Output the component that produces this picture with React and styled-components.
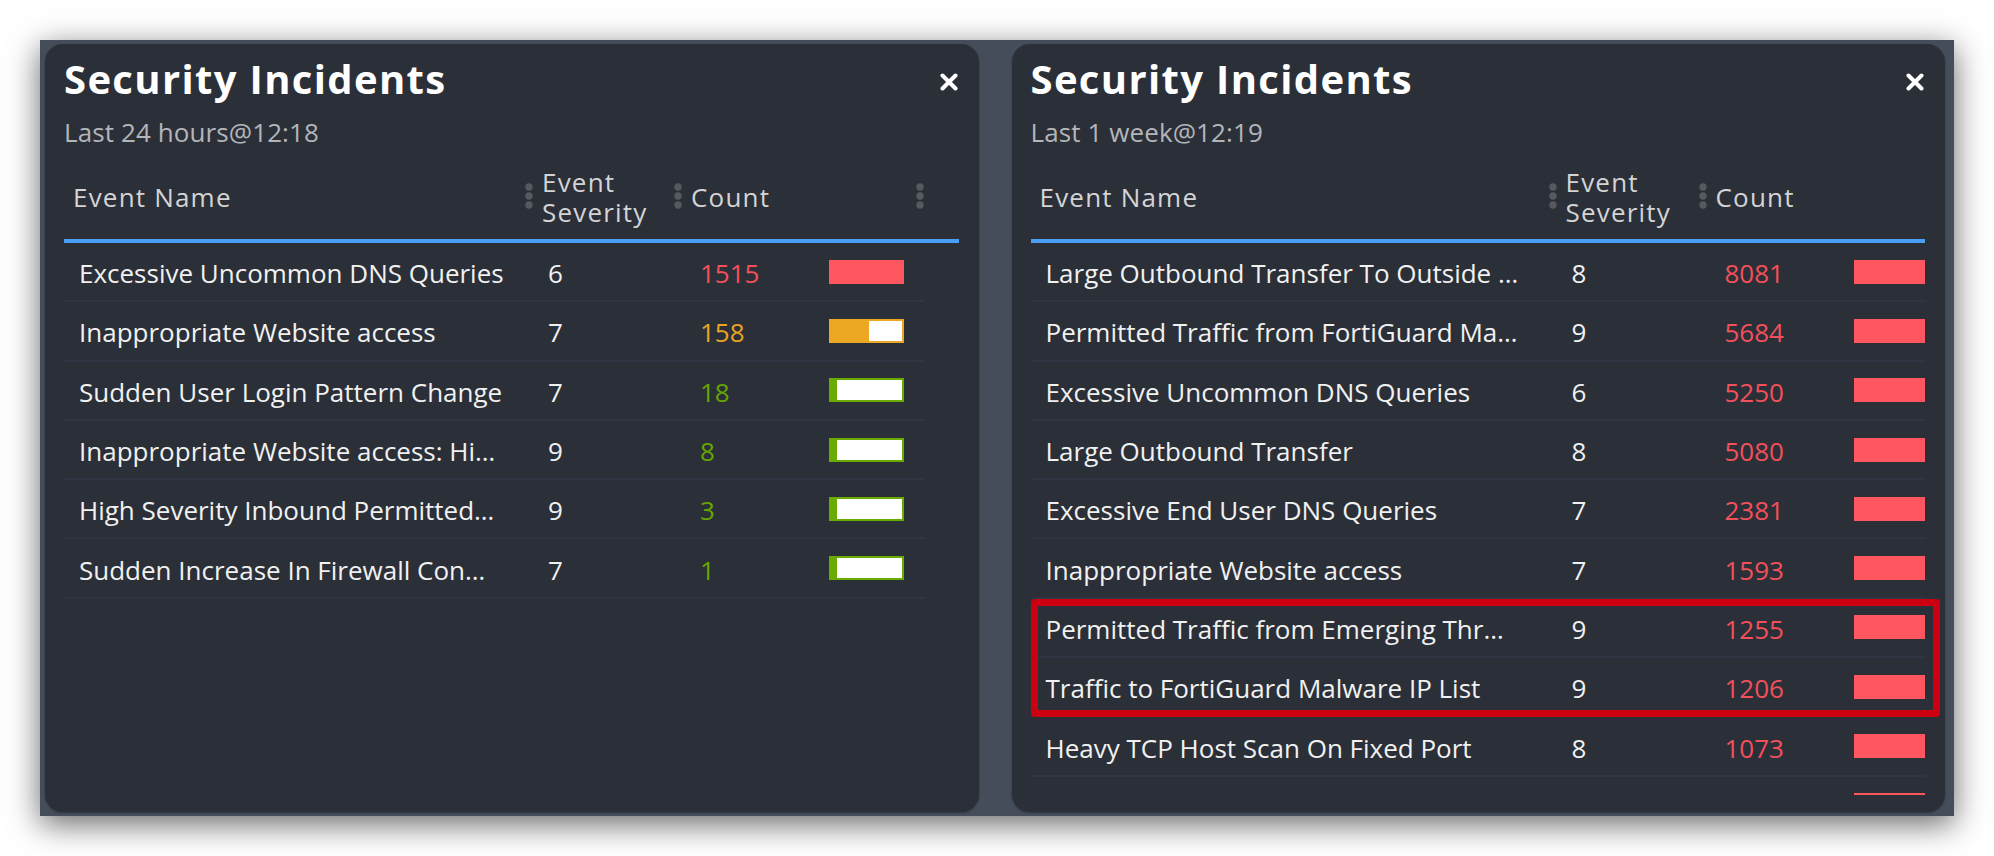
import React from "react";
import styled, { createGlobalStyle } from "styled-components";

const GlobalStyle = createGlobalStyle`
  html, body {
    margin: 0;
    padding: 0;
    background: #ffffff;
  }
  body {
    font-family: "Open Sans", "Noto Sans", sans-serif;
  }
`;

const LEVELS = {
  high: { text: "#f2505b", bar: "#ff5660" },
  medium: { text: "#e9a424", bar: "#eca822" },
  low: { text: "#66a600", bar: "#6aab00" },
};

const Page = styled.div`
  padding: 40px;
  width: 1994px;
  box-sizing: border-box;
`;

const Frame = styled.div`
  width: 1914px;
  height: 776px;
  box-sizing: border-box;
  padding: 4px 9px 4px 5px;
  display: flex;
  gap: 33px;
  background: #454c5a;
  box-shadow: 0 8px 30px rgba(0, 0, 0, 0.6);
`;

const Panel = styled.section`
  flex: 1;
  min-width: 0;
  display: flex;
  flex-direction: column;
  padding: 11px 20px 17px 19px;
  background: #2b2f38;
  border-radius: 18px;
  box-shadow: 0 1px 2px rgba(0, 0, 0, 0.3);
`;

const TitleBar = styled.div`
  display: flex;
  justify-content: space-between;
  align-items: flex-start;
`;

const Title = styled.h2`
  margin: 0;
  font-size: 40px;
  line-height: 48px;
  font-weight: 700;
  letter-spacing: 1.35px;
  color: #ffffff;
`;

const CloseButton = styled.button`
  margin: 18px 1px 0 0;
  padding: 0;
  border: 0;
  background: none;
  width: 18px;
  height: 18px;
  display: flex;
  cursor: pointer;
`;

const Subtitle = styled.div`
  margin-top: 13px;
  font-size: 26px;
  line-height: 32px;
  letter-spacing: 0.1px;
  color: #b3b5b9;
`;

const HeaderRow = styled.div`
  display: grid;
  grid-template-columns: ${(props) => props.cols};
  height: 85px;
  margin-top: 6px;
  border-bottom: 4px solid #4a9ff5;
`;

const HeaderCell = styled.div`
  display: flex;
  align-items: center;
  padding-left: 9px;
  font-size: 26px;
  line-height: 30px;
  letter-spacing: 1.2px;
  color: #d4d4d6;
`;

const HeaderLabel = styled.span`
  flex: 1;
`;

const Body = styled.div`
  flex: 1;
  min-height: 0;
  overflow-x: visible;
  overflow-y: clip;
`;

const Row = styled.div`
  display: grid;
  grid-template-columns: ${(props) => props.cols};
  width: max-content;
  height: 59.3px;
  box-sizing: border-box;
  align-items: center;
  border-bottom: 2px solid #2f3543;
  font-size: 26px;
  color: #f1f1f1;
`;

const Cell = styled.div`
  padding: 3px 0 0 15px;
  white-space: nowrap;
  overflow: hidden;
`;

const CountCell = styled(Cell)`
  display: flex;
  align-items: center;
  padding: 0 0 0 18px;
`;

const CountValue = styled.span`
  width: 129px;
  flex: none;
  padding-top: 3px;
  color: ${(props) => LEVELS[props.level].text};
`;

const Bar = styled.div`
  width: ${(props) => props.width}px;
  height: 24px;
  box-sizing: border-box;
  padding: 2px;
  display: flex;
  justify-content: flex-end;
  background: ${(props) => LEVELS[props.level].bar};
`;

const BarRest = styled.div`
  height: 100%;
  background: #ffffff;
`;

const Highlight = styled.div`
  position: relative;

  &::after {
    content: "";
    position: absolute;
    top: 0;
    left: 0;
    right: -15px;
    bottom: 0;
    border: 7px solid #cc0010;
    border-radius: 4px;
    pointer-events: none;
  }
`;

function Grip() {
  return (
    <svg width="8" height="27" viewBox="0 0 8 27">
      <circle cx="4" cy="4" r="3.7" fill="#57595e" />
      <circle cx="4" cy="13" r="3.7" fill="#57595e" />
      <circle cx="4" cy="22" r="3.7" fill="#57595e" />
    </svg>
  );
}

function CloseIcon() {
  return (
    <svg width="18" height="18" viewBox="0 0 18 18">
      <path
        d="M2.5 2.5 L15.5 15.5 M15.5 2.5 L2.5 15.5"
        stroke="#ffffff"
        strokeWidth="4"
        strokeLinecap="round"
      />
    </svg>
  );
}

function IncidentRow({ row, cols, barWidth }) {
  const rest = Math.max(0, 100 - row.pct);
  return (
    <Row cols={cols}>
      <Cell>{row.name}</Cell>
      <Cell>{row.severity}</Cell>
      <CountCell>
        <CountValue level={row.level}>{row.count}</CountValue>
        <Bar width={barWidth} level={row.level}>
          {rest > 0 && <BarRest style={{ width: `${rest}%` }} />}
        </Bar>
      </CountCell>
    </Row>
  );
}

function IncidentPanel({ subtitle, cols, barWidth, lastGrip, rows, highlight }) {
  const [from, to] = highlight || [-1, -1];
  const before = highlight ? rows.slice(0, from) : rows;
  const marked = highlight ? rows.slice(from, to) : [];
  const after = highlight ? rows.slice(to) : [];

  return (
    <Panel>
      <TitleBar>
        <Title>Security Incidents</Title>
        <CloseButton aria-label="Close">
          <CloseIcon />
        </CloseButton>
      </TitleBar>
      <Subtitle>{subtitle}</Subtitle>
      <HeaderRow cols={cols}>
        <HeaderCell>
          <HeaderLabel>Event Name</HeaderLabel>
          <Grip />
        </HeaderCell>
        <HeaderCell>
          <HeaderLabel>Event Severity</HeaderLabel>
          <Grip />
        </HeaderCell>
        <HeaderCell>
          <HeaderLabel>Count</HeaderLabel>
          {lastGrip && <Grip />}
        </HeaderCell>
      </HeaderRow>
      <Body>
        {before.map((row) => (
          <IncidentRow key={row.name} row={row} cols={cols} barWidth={barWidth} />
        ))}
        {marked.length > 0 && (
          <Highlight>
            {marked.map((row) => (
              <IncidentRow key={row.name} row={row} cols={cols} barWidth={barWidth} />
            ))}
          </Highlight>
        )}
        {after.map((row) => (
          <IncidentRow key={row.name} row={row} cols={cols} barWidth={barWidth} />
        ))}
      </Body>
    </Panel>
  );
}

const dayRows = [
  { name: "Excessive Uncommon DNS Queries", severity: 6, count: 1515, level: "high", pct: 100 },
  { name: "Inappropriate Website access", severity: 7, count: 158, level: "medium", pct: 54 },
  { name: "Sudden User Login Pattern Change", severity: 7, count: 18, level: "low", pct: 9 },
  { name: "Inappropriate Website access: Hi…", severity: 9, count: 8, level: "low", pct: 9 },
  { name: "High Severity Inbound Permitted…", severity: 9, count: 3, level: "low", pct: 9 },
  { name: "Sudden Increase In Firewall Con…", severity: 7, count: 1, level: "low", pct: 9 },
];

const weekRows = [
  { name: "Large Outbound Transfer To Outside …", severity: 8, count: 8081, level: "high", pct: 100 },
  { name: "Permitted Traffic from FortiGuard Ma…", severity: 9, count: 5684, level: "high", pct: 100 },
  { name: "Excessive Uncommon DNS Queries", severity: 6, count: 5250, level: "high", pct: 100 },
  { name: "Large Outbound Transfer", severity: 8, count: 5080, level: "high", pct: 100 },
  { name: "Excessive End User DNS Queries", severity: 7, count: 2381, level: "high", pct: 100 },
  { name: "Inappropriate Website access", severity: 7, count: 1593, level: "high", pct: 100 },
  { name: "Permitted Traffic from Emerging Thr…", severity: 9, count: 1255, level: "high", pct: 100 },
  { name: "Traffic to FortiGuard Malware IP List", severity: 9, count: 1206, level: "high", pct: 100 },
  { name: "Heavy TCP Host Scan On Fixed Port", severity: 8, count: 1073, level: "high", pct: 100 },
  { name: "Sudden Increase In Firewall Connections", severity: 7, count: 1012, level: "high", pct: 100 },
];

export default function App() {
  return (
    <>
      <GlobalStyle />
      <Page>
        <Frame>
          <IncidentPanel
            subtitle="Last 24 hours@12:18"
            cols="469px 149px 242px"
            barWidth={75}
            lastGrip
            rows={dayRows}
          />
          <IncidentPanel
            subtitle="Last 1 week@12:19"
            cols="526px 150px 219px"
            barWidth={71}
            rows={weekRows}
            highlight={[6, 8]}
          />
        </Frame>
      </Page>
    </>
  );
}
